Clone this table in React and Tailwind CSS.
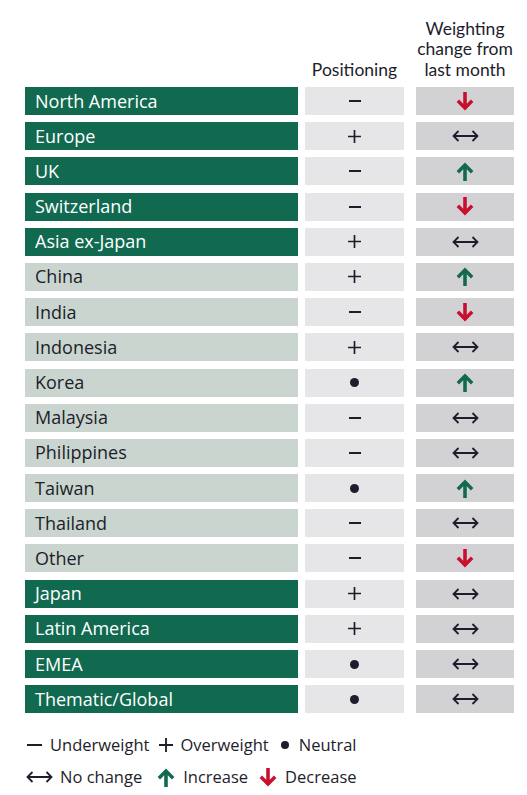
import React from "react";

const rows = [
  ["North America", "dark", "minus", "down"],
  ["Europe", "dark", "plus", "none"],
  ["UK", "dark", "minus", "up"],
  ["Switzerland", "dark", "minus", "down"],
  ["Asia ex-Japan", "dark", "plus", "none"],
  ["China", "light", "plus", "up"],
  ["India", "light", "minus", "down"],
  ["Indonesia", "light", "plus", "none"],
  ["Korea", "light", "dot", "up"],
  ["Malaysia", "light", "minus", "none"],
  ["Philippines", "light", "minus", "none"],
  ["Taiwan", "light", "dot", "up"],
  ["Thailand", "light", "minus", "none"],
  ["Other", "light", "minus", "down"],
  ["Japan", "dark", "plus", "none"],
  ["Latin America", "dark", "plus", "none"],
  ["EMEA", "dark", "dot", "none"],
  ["Thematic/Global", "dark", "dot", "none"],
];

function Minus({ w = 12 }) {
  return <span className="block h-[2px] bg-[#1d1d2b]" style={{ width: w }} />;
}
function Plus({ s = 13 }) {
  return (
    <svg width={s} height={s} viewBox="0 0 13 13">
      <path d="M6.5 0 V13 M0 6.5 H13" stroke="#1d1d2b" strokeWidth="1.7" />
    </svg>
  );
}
function Dot() {
  return <span className="block w-[9px] h-[9px] rounded-full bg-[#1d1d2b]" />;
}
function Up() {
  return (
    <svg width="18" height="19" viewBox="0 0 16 17">
      <polygon
        points="8,0.5 15.5,8 13.3,10.2 9.6,6.5 9.6,17 6.4,17 6.4,6.5 2.7,10.2 0.5,8"
        fill="#12694f"
      />
    </svg>
  );
}
function Down() {
  return (
    <svg width="18" height="19" viewBox="0 0 16 17">
      <polygon
        points="8,16.5 15.5,9 13.3,6.8 9.6,10.5 9.6,0 6.4,0 6.4,10.5 2.7,6.8 0.5,9"
        fill="#c8102e"
      />
    </svg>
  );
}
function LR() {
  return (
    <svg width="27" height="12" viewBox="0 0 27 12">
      <path
        d="M1.5 6 H25.5 M6.5 1 L1.5 6 L6.5 11 M20.5 1 L25.5 6 L20.5 11"
        stroke="#1d1d2b"
        strokeWidth="1.8"
        fill="none"
      />
    </svg>
  );
}

function Pos({ t }) {
  if (t === "minus") return <Minus />;
  if (t === "plus") return <Plus />;
  return <Dot />;
}
function Chg({ t }) {
  if (t === "up") return <Up />;
  if (t === "down") return <Down />;
  return <LR />;
}

export default function App() {
  return (
    <div
      className="w-[527px] h-[795px] bg-white text-[#1d1d2b]"
      style={{ fontFamily: '"Open Sans", "Noto Sans", sans-serif' }}
    >
      <div className="pl-[25px] pt-[14px]">
        <div
          className="flex items-end h-[66px]"
          style={{ fontFamily: 'Lato, "Open Sans", sans-serif' }}
        >
          <div className="w-[273px]" />
          <div className="w-[99px] ml-[7px] text-center text-[17.5px] leading-[20.5px] whitespace-nowrap">
            Positioning
          </div>
          <div className="w-[98px] ml-[12px] flex flex-col items-center text-[17.5px] leading-[20.5px] whitespace-nowrap">
            <div className="h-[20.5px]">Weighting</div>
            <div className="h-[20.5px]">change from</div>
            <div className="h-[20.5px]">last month</div>
          </div>
        </div>
        <div className="flex flex-col gap-[7.2px] mt-[7px]">
          {rows.map(([name, tone, pos, chg]) => (
            <div key={name} className="flex h-[28px]">
              <div
                className={
                  tone === "dark"
                    ? "w-[273px] bg-[#116a50] text-white font-medium text-[18px] pl-[10px] flex items-center"
                    : "w-[273px] bg-[#c9d5ce] text-[#1d1d2b] text-[18px] pl-[10px] flex items-center"
                }
              >
                {name}
              </div>
              <div className="w-[99px] ml-[7px] bg-[#e6e6e8] flex items-center justify-center">
                <Pos t={pos} />
              </div>
              <div className="w-[98px] ml-[12px] bg-[#d2d2d4] flex items-center justify-center">
                <Chg t={chg} />
              </div>
            </div>
          ))}
        </div>
        <div className="mt-[20px] flex items-center text-[16.5px] leading-[20px] h-[24px]">
          <span className="ml-[2px] mr-[8px]">
            <Minus w={15} />
          </span>
          <span>Underweight</span>
          <span className="ml-[10px] mr-[7px] flex">
            <Plus s={14} />
          </span>
          <span>Overweight</span>
          <span className="ml-[12px] mr-[10px] flex">
            <span className="block w-[8px] h-[8px] rounded-full bg-[#1d1d2b]" />
          </span>
          <span>Neutral</span>
        </div>
        <div className="mt-[8px] flex items-center text-[16.5px] leading-[20px] h-[24px]">
          <span className="ml-[1px] mr-[7px] flex">
            <LR />
          </span>
          <span>No change</span>
          <span className="ml-[15px] mr-[8px] flex">
            <Up />
          </span>
          <span>Increase</span>
          <span className="ml-[11px] mr-[8px] flex">
            <Down />
          </span>
          <span>Decrease</span>
        </div>
      </div>
    </div>
  );
}
